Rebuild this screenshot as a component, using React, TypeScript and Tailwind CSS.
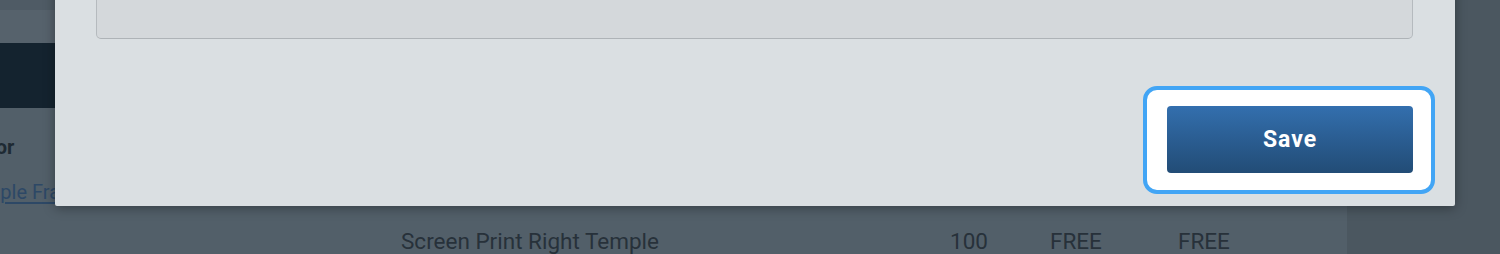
import React from 'react';

export default function App() {
  return (
    <div className="relative w-[1500px] h-[254px] overflow-hidden bg-[#525f69] font-['Roboto',sans-serif]">
      {/* page under the overlay */}
      <div className="flex h-full">
        <div className="w-[1347px] flex flex-col">
          <div className="h-[10px] bg-[#4f5b65]" />
          <div className="h-[33px] bg-[#56626c]" />
          <div className="h-[65px] bg-[#14232f]" />
          <div className="flex flex-col pt-[27px]">
            <div className="ml-[-34px] text-[20px] font-bold leading-[24px] text-[#1e2a33]">Color</div>
            <div className="mt-[21px] ml-[-40px] text-[20px] leading-[24px] text-[#2d4866] underline underline-offset-[3px]">Sample Frame</div>
            <div className="mt-[25px] flex text-[22.5px] leading-[24px] text-[#27313a]">
              <span className="pl-[401px] w-[950px]">Screen Print Right Temple</span>
              <span className="w-[100px]">100</span>
              <span className="w-[128px]">FREE</span>
              <span>FREE</span>
            </div>
          </div>
        </div>
        <div className="flex-1 bg-[#4b5760]" />
      </div>

      {/* modal */}
      <div className="absolute left-[55px] top-[-80px] w-[1400px] bg-[#dadfe2] rounded-b-[2px] shadow-[0_2px_12px_rgba(0,0,0,0.35)] pt-5 pb-3">
        <div className="pl-[41px] pr-[42px]">
          <div className="h-[99px] rounded-[5px] border border-[#b5babe] border-b-[#aeb3b7] bg-[#d4d8db]" />
        </div>
        <div className="mt-[47px] flex justify-end pr-5">
          <div className="rounded-[14px] border-4 border-[#42a5f5] bg-white pl-5 pr-[18px] pt-4 pb-[17px]">
            <button className="w-[246px] h-[67px] rounded-[4px] bg-gradient-to-b from-[#336fae] to-[#224c76] pt-[2px] text-white text-[23px] font-bold tracking-[1px]">
              Save
            </button>
          </div>
        </div>
      </div>
    </div>
  );
}
